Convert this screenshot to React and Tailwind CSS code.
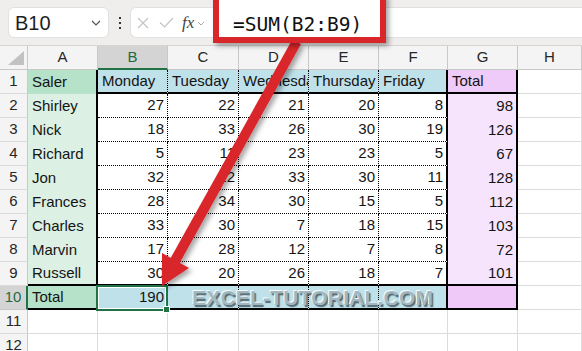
import React from 'react';

const header = ['Saler', 'Monday', 'Tuesday', 'Wednesday', 'Thursday', 'Friday', 'Total'];

const rows = [
  ['Shirley', 27, 22, 21, 20, 8, 98],
  ['Nick', 18, 33, 26, 30, 19, 126],
  ['Richard', 5, 11, 23, 23, 5, 67],
  ['Jon', 32, 22, 33, 30, 11, 128],
  ['Frances', 28, 34, 30, 15, 5, 112],
  ['Charles', 33, 30, 7, 18, 15, 103],
  ['Marvin', 17, 28, 12, 7, 8, 72],
  ['Russell', 30, 20, 26, 18, 7, 101],
];

const letters = ['A', 'B', 'C', 'D', 'E', 'F', 'G', 'H'];

const GRID = 'border-r border-b border-[#dcdcdc]';
const DOT_R = 'border-r border-r-black [border-right-style:dotted]';
const DOT_B = 'border-b border-b-black [border-bottom-style:dotted]';
const THICK_R = 'border-r-2 border-r-black';
const THICK_B = 'border-b-2 border-b-black';

// border + fill for a body cell, r = 1..12, c = 0..7 (A..H)
function cellStyle(r, c) {
  if (r > 10 || c === 7) return GRID;
  if (c === 0) {
    if (r === 1) return 'bg-[#b5e2c8] ' + THICK_R;
    if (r === 10) return 'bg-[#b5e2c8] ' + THICK_R + ' ' + THICK_B;
    if (r === 9) return 'bg-[#dcf0e4] ' + THICK_R + ' ' + THICK_B;
    return 'bg-[#dcf0e4] ' + THICK_R;
  }
  if (c === 6) {
    if (r === 1) return 'bg-[#eecbf8] ' + THICK_R + ' ' + THICK_B;
    if (r === 10) return 'bg-[#efcaf9] ' + THICK_R + ' ' + THICK_B;
    if (r === 9) return 'bg-[#f6e4fc] ' + THICK_R + ' ' + THICK_B;
    return 'bg-[#f6e4fc] ' + THICK_R;
  }
  const right = c === 5 ? THICK_R : DOT_R;
  if (r === 1) return 'bg-[#bfe1ea] ' + right + ' ' + THICK_B;
  if (r === 10) return 'bg-[#bfe1ea] ' + right + ' ' + THICK_B;
  if (r === 9) return 'bg-white ' + right + ' ' + THICK_B;
  return 'bg-white ' + right + ' ' + DOT_B;
}

function cellValue(r, c) {
  if (c === 7 || r > 10) return null;
  if (r === 1) return header[c];
  if (r === 10) return c === 0 ? 'Total' : c === 1 ? 190 : null;
  return rows[r - 2][c];
}

const Cell = ({ r, c }) => {
  const v = cellValue(r, c);
  const num = typeof v === 'number';
  return (
    <div
      className={
        'relative box-border h-[24px] flex items-center overflow-hidden whitespace-nowrap text-[15px] text-[#141414] ' +
        (num ? 'justify-end pr-[3px] ' : 'pl-[4px] ') +
        (r === 10 && c === 1 ? 'overflow-visible z-10 ' : '') +
        cellStyle(r, c)
      }
    >
      {v}
      {r === 10 && c === 1 && (
        <div className="absolute -left-[2px] -top-[1px] w-[72px] h-[26px] border-2 border-[#217346] shadow-[inset_0_0_0_1px_#ffffff]">
          <div className="absolute -right-[4px] -bottom-[4px] w-[7px] h-[7px] bg-[#217346] border border-white" />
        </div>
      )}
    </div>
  );
};

const TopBar = () => (
  <div className="h-[46px] bg-[#f0eeec] border-b border-[#d6d4d2] flex items-start pt-[7px] pl-[8px]">
    <div className="w-[101px] h-[31px] rounded-[6px] bg-white border border-[#e3e1df] flex items-center justify-between pl-[6px] pr-[7px]">
      <span className="text-[20px] text-[#1e1e1e]">B10</span>
      <svg width="10" height="6" viewBox="0 0 10 6" fill="none" stroke="#555" strokeWidth="1.2">
        <path d="M1 1l4 4 4-4" />
      </svg>
    </div>
    <div className="w-[21px] h-[31px] flex flex-col items-center justify-center gap-[3px]">
      <span className="w-[2px] h-[2px] bg-[#333]" />
      <span className="w-[2px] h-[2px] bg-[#333]" />
      <span className="w-[2px] h-[2px] bg-[#333]" />
    </div>
    <div className="flex-1 h-[31px] rounded-l-[6px] bg-white border border-r-0 border-[#e3e1df] flex items-center pl-[6px] gap-[10px]">
      <svg width="12" height="12" viewBox="0 0 12 12" fill="none" stroke="#c4c4c4" strokeWidth="1.2">
        <path d="M1 1l10 10M11 1L1 11" />
      </svg>
      <svg width="15" height="11" viewBox="0 0 15 11" fill="none" stroke="#c4c4c4" strokeWidth="1.2">
        <path d="M1 5.5l4.5 4.5L14 1" />
      </svg>
      <span className="font-['Liberation_Serif',serif] italic text-[17px] text-[#444] -ml-[2px]">fx</span>
      <svg width="8" height="5" viewBox="0 0 8 5" fill="none" stroke="#aaa" strokeWidth="1" className="-ml-[7px] mt-[2px]">
        <path d="M1 1l3 3 3-3" />
      </svg>
    </div>
  </div>
);

export default function App() {
  const body = [];
  for (let r = 1; r <= 12; r++) {
    body.push(
      <div
        key={'h' + r}
        className={
          'box-border h-[24px] flex items-center justify-center text-[15px] ' +
          (r === 10
            ? 'bg-[#d4d4d4] text-[#1d6b40] border-r-2 border-r-[#217346] border-b border-b-[#c8c8c8]'
            : 'bg-[#f4f4f4] text-[#262626] border-r border-r-[#c8c8c8] border-b border-b-[#dadada]')
        }
      >
        {r}
      </div>
    );
    for (let c = 0; c < 8; c++) body.push(<Cell key={r + '-' + c} r={r} c={c} />);
  }

  return (
    <div className="relative w-[582px] h-[351px] overflow-hidden bg-white font-['Liberation_Sans',Arial,sans-serif]">
      <TopBar />

      <div className="grid grid-cols-[28px_70px_70px_71px_70px_70px_69px_70px_1fr] grid-rows-[24px]">
        <div className="relative box-border h-[24px] bg-[#f4f4f4] border-r border-b border-[#c8c8c8]">
          <svg className="absolute right-[3px] bottom-[4px]" width="16" height="14" viewBox="0 0 16 14">
            <path d="M16 0V14H0Z" fill="#c2c2c2" />
          </svg>
        </div>
        {letters.map((l) => (
          <div
            key={l}
            className={
              'box-border h-[24px] flex items-center justify-center text-[15px] ' +
              (l === 'B'
                ? 'bg-[#d4d4d4] text-[#1d6b40] border-b-2 border-b-[#217346] border-r border-r-[#c8c8c8]'
                : 'bg-[#f4f4f4] text-[#262626] border-r border-r-[#c8c8c8] border-b border-b-[#c8c8c8]')
            }
          >
            {l}
          </div>
        ))}
        {body}
      </div>

      {/* watermark */}
      <div className="absolute z-20 left-[192px] top-[286px] h-[24px] flex items-center pointer-events-none">
        <span className="font-bold text-[21px] tracking-[0.2px] text-[#a2b7bf] [text-shadow:-1px_-1px_0_#f6fcfe,1.5px_1.5px_1px_#566a73]">
          EXCEL-TUTORIAL.COM
        </span>
      </div>

      {/* arrow */}
      <svg className="absolute z-20 left-0 top-0 pointer-events-none" width="582" height="351" viewBox="0 0 582 351">
        <defs>
          <filter id="sh" x="-20%" y="-20%" width="140%" height="140%">
            <feDropShadow dx="3" dy="3" stdDeviation="2.5" floodColor="#000" floodOpacity="0.35" />
          </filter>
        </defs>
        <g filter="url(#sh)" fill="#d8262b">
          <path d="M292 40 L301 44 L178 266 L169 261 Z" />
          <path d="M162 286 L162 253 L189 268 Z" />
        </g>
      </svg>

      {/* formula highlight */}
      <div className="absolute z-30 left-[213px] -top-[6px] w-[173px] h-[49px] border-[6px] border-[#d8262b] bg-white shadow-[3px_3px_5px_rgba(0,0,0,0.35)] pl-[14px] pt-[15px]">
        <div className="font-['DejaVu_Sans_Mono',monospace] text-[19.5px] leading-[20px] text-[#111]">=SUM(B2:B9)</div>
      </div>
    </div>
  );
}
